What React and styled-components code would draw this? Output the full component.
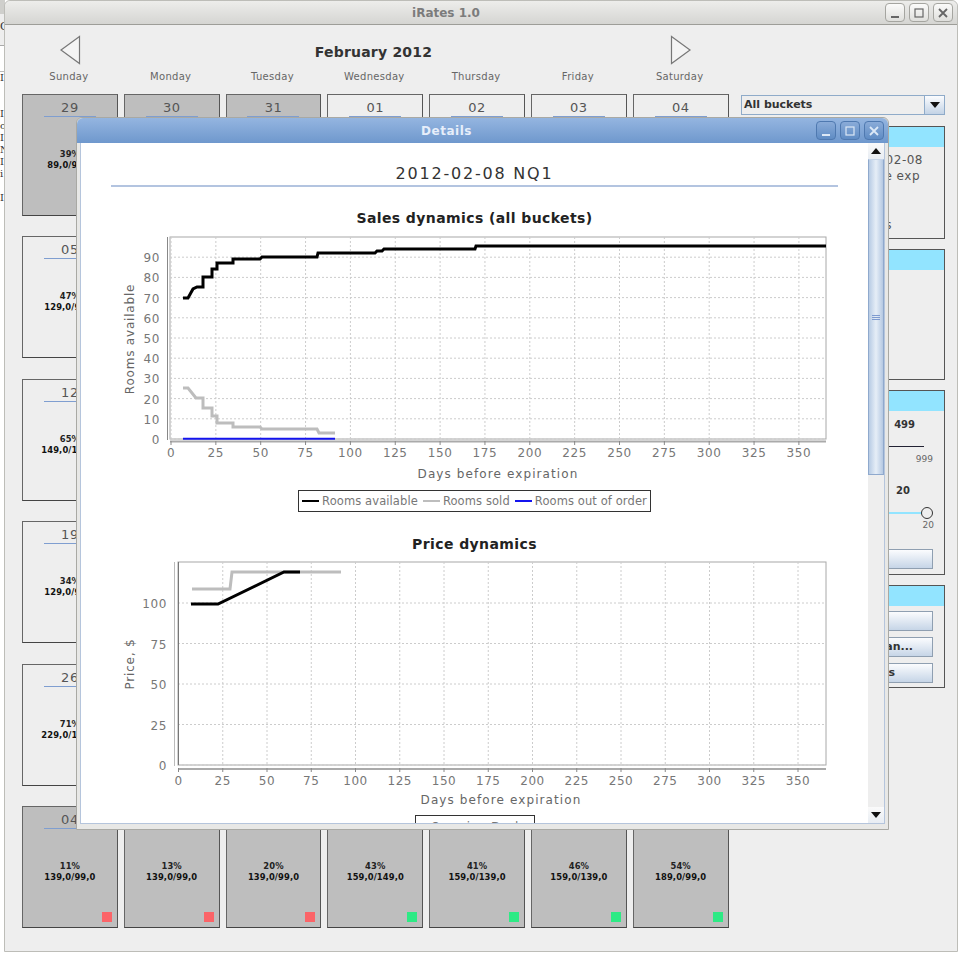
import React from 'react';
import styled, { createGlobalStyle } from 'styled-components';

const GlobalStyle = createGlobalStyle`
  html, body {
    margin: 0;
    padding: 0;
    background: #ffffff;
    font-family: "DejaVu Sans", sans-serif;
  }
`;

const weeks = [
  [
    { day: '29', pct: '39%', price: '89,0/99,0', past: true },
    { day: '30', past: true },
    { day: '31', past: true },
    { day: '01' },
    { day: '02' },
    { day: '03' },
    { day: '04' },
  ],
  [{ day: '05', pct: '47%', price: '129,0/99,0' }, {}, {}, {}, {}, {}, {}],
  [{ day: '12', pct: '65%', price: '149,0/129,0' }, {}, {}, {}, {}, {}, {}],
  [{ day: '19', pct: '34%', price: '129,0/99,0' }, {}, {}, {}, {}, {}, {}],
  [{ day: '26', pct: '71%', price: '229,0/139,0' }, {}, {}, {}, {}, {}, {}],
  [
    { day: '04', pct: '11%', price: '139,0/99,0', past: true, flag: 'red' },
    { day: '05', pct: '13%', price: '139,0/99,0', past: true, flag: 'red' },
    { day: '06', pct: '20%', price: '139,0/99,0', past: true, flag: 'red' },
    { day: '07', pct: '43%', price: '159,0/149,0', past: true, flag: 'green' },
    { day: '08', pct: '41%', price: '159,0/139,0', past: true, flag: 'green' },
    { day: '09', pct: '46%', price: '159,0/139,0', past: true, flag: 'green' },
    { day: '10', pct: '54%', price: '189,0/99,0', past: true, flag: 'green' },
  ],
];

const dayNames = ['Sunday', 'Monday', 'Tuesday', 'Wednesday', 'Thursday', 'Friday', 'Saturday'];
const backLetters = ['I', '', '', 'I', 'o', 'I', 'N', 'I', 'i', '', 'I'];

const range = (from, to, step) => {
  const out = [];
  for (let v = from; v <= to; v += step) out.push(v);
  return out;
};

const availablePts = '183,298 188,298 193,289 197,287 203,287 203,277 212,277 212,269 217,269 217,263 233,263 233,259 260,259 262,257 317,257 318,253 375,253 377,251 382,251 384,249 475,249 476,246 826,246';
const soldPts = '183,388 188,388 196,398 203,398 203,408 212,408 212,416 217,416 217,423 233,423 233,427 260,427 262,429 317,429 319,433 335,433';

const SalesChart = () => {
  const xs = range(0, 350, 25);
  const ys = range(0, 90, 10);
  const px = (v) => 171 + v * 1.794;
  const py = (v) => 439 - v * 2.02;
  return (
    <ChartSvg viewBox="81 227 787 263" height="263">
      <rect x="170" y="237" width="656" height="202" fill="#fff" stroke="#a8a8a8" />
      {xs.map((v) => (
        <line key={v} x1={px(v)} x2={px(v)} y1="237" y2="439" stroke="#ccc" strokeDasharray="2 2" />
      ))}
      {ys.map((v) => (
        <line key={v} x1="170" x2="826" y1={py(v)} y2={py(v)} stroke="#ccc" strokeDasharray="2 2" />
      ))}
      <line x1="167.5" x2="167.5" y1="237" y2="440" stroke="#888" />
      <line x1="170" x2="826" y1="441.5" y2="441.5" stroke="#aaa" strokeWidth="2" />
      {xs.map((v) => (
        <line key={v} x1={px(v)} x2={px(v)} y1="441" y2="445" stroke="#888" />
      ))}
      <polyline points={availablePts} fill="none" stroke="#000" strokeWidth="3" />
      <polyline points={soldPts} fill="none" stroke="#bdbdbd" strokeWidth="3" />
      <line x1="183" x2="335" y1="438.7" y2="438.7" stroke="#1414ee" strokeWidth="2" />
      {xs.map((v) => (
        <AxisText key={v} x={px(v)} y="457" textAnchor="middle">{v}</AxisText>
      ))}
      {ys.map((v) => (
        <AxisText key={v} x="160" y={py(v) + 5} textAnchor="end">{v}</AxisText>
      ))}
      <AxisLabel x="498" y="478" textAnchor="middle">Days before expiration</AxisLabel>
      <AxisLabel transform="translate(134 339) rotate(-90)" textAnchor="middle" $tight>Rooms available</AxisLabel>
    </ChartSvg>
  );
};

const PriceChart = () => {
  const xs = range(0, 350, 25);
  const ys = range(0, 100, 25);
  const px = (v) => 178.5 + v * 1.77;
  const py = (v) => 765 - v * 1.62;
  return (
    <ChartSvg viewBox="81 553 787 262" height="262">
      <rect x="178" y="562" width="648" height="203" fill="#fff" stroke="#a8a8a8" />
      {xs.map((v) => (
        <line key={v} x1={px(v)} x2={px(v)} y1="562" y2="765" stroke="#ccc" strokeDasharray="2 2" />
      ))}
      {ys.map((v) => (
        <line key={v} x1="178" x2="826" y1={py(v)} y2={py(v)} stroke="#ccc" strokeDasharray="2 2" />
      ))}
      <line x1="178.5" x2="178.5" y1="562" y2="765" stroke="#777" />
      <line x1="174.5" x2="174.5" y1="562" y2="766" stroke="#bbb" />
      <line x1="178" x2="826" y1="769" y2="769" stroke="#aaa" strokeWidth="2" />
      {xs.map((v) => (
        <line key={v} x1={px(v)} x2={px(v)} y1="768" y2="772" stroke="#888" />
      ))}
      <polyline points="192,589 230,589 232,572 341,572" fill="none" stroke="#bdbdbd" strokeWidth="3" />
      <polyline points="191,604 218,604 284,572 300,572" fill="none" stroke="#000" strokeWidth="3" />
      {xs.map((v) => (
        <AxisText key={v} x={px(v)} y="785" textAnchor="middle">{v}</AxisText>
      ))}
      {ys.map((v) => (
        <AxisText key={v} x="167" y={py(v) + 5} textAnchor="end">{v}</AxisText>
      ))}
      <AxisLabel x="501" y="804" textAnchor="middle">Days before expiration</AxisLabel>
      <AxisLabel transform="translate(134 664) rotate(-90)" textAnchor="middle" $tight>Price, $</AxisLabel>
    </ChartSvg>
  );
};

const WinButtons = ({ blue }) => (
  <WinButtonRow $blue={blue}>
    <WinButton $blue={blue}>
      <svg width="12" height="12" viewBox="0 0 12 12"><rect x="2" y="9" width="8" height="2" fill="currentColor" /></svg>
    </WinButton>
    <WinButton $blue={blue}>
      <svg width="12" height="12" viewBox="0 0 12 12"><rect x="2" y="2" width="8" height="8" fill="none" stroke="currentColor" strokeWidth="1.2" /></svg>
    </WinButton>
    <WinButton $blue={blue}>
      <svg width="12" height="12" viewBox="0 0 12 12"><path d="M2 2 L10 10 M10 2 L2 10" stroke="currentColor" strokeWidth="1.8" /></svg>
    </WinButton>
  </WinButtonRow>
);

const Arrow = ({ flip }) => (
  <svg width="22" height="30" viewBox="0 0 22 30">
    <polygon
      points={flip ? '1.5,1.5 20,15 1.5,28.5' : '20.5,1.5 2,15 20.5,28.5'}
      fill="#f4f4f4"
      stroke="#777"
      strokeWidth="1.2"
    />
  </svg>
);

const App = () => (
  <Desktop>
    <GlobalStyle />
    <BackWindow>
      <BackTitle />
      <BackToolbar>C</BackToolbar>
      <BackBlank />
      {backLetters.map((letter, i) => (
        <BackRow key={i}>{letter}</BackRow>
      ))}
    </BackWindow>
    <MainWindow>
      <TitleBar>
        <TitleText>iRates 1.0</TitleText>
        <WinButtons />
      </TitleBar>
      <MainBody>
        <CalendarColumn>
          <MonthBar>
            <Arrow />
            <MonthName>February 2012</MonthName>
            <Arrow flip />
          </MonthBar>
          <DayNames>
            {dayNames.map((name) => (
              <DayName key={name}>{name}</DayName>
            ))}
          </DayNames>
          <Weeks>
            {weeks.map((week, i) => (
              <Week key={i}>
                {week.map((cell, j) => (
                  <Cell key={j} $past={cell.past}>
                    <CellDay>{cell.day}</CellDay>
                    <CellPct>{cell.pct}</CellPct>
                    <CellPrice>{cell.price}</CellPrice>
                    {cell.flag && <Flag $color={cell.flag} />}
                  </Cell>
                ))}
              </Week>
            ))}
          </Weeks>
        </CalendarColumn>
        <SideColumn>
          <BucketSelect>
            <BucketLabel>All buckets</BucketLabel>
            <BucketArrow>
              <svg width="10" height="6" viewBox="0 0 10 6"><polygon points="0,0 10,0 5,6" fill="#111" /></svg>
            </BucketArrow>
          </BucketSelect>
          <SidePanel $height={113}>
            <SideHead />
            <SideInfo $right={21} $top={5}>2012-02-08</SideInfo>
            <SideInfo $right={24} $top={0}>Days before exp</SideInfo>
            <SideInfo $right={52} $top={33}>Rooms</SideInfo>
          </SidePanel>
          <SidePanel $height={131}>
            <SideHead />
          </SidePanel>
          <SidePanel $height={185}>
            <SideHead />
            <SliderValue $right={29} $top={8}>499</SliderValue>
            <SliderLine />
            <SliderEnd $right={11} $top={6}>999</SliderEnd>
            <SliderValue $right={34} $top={20}>20</SliderValue>
            <SliderTrack>
              <SliderKnob />
            </SliderTrack>
            <SliderEnd $right={10} $top={5}>20</SliderEnd>
            <SideButton $top={18} />
          </SidePanel>
          <SidePanel $height={103}>
            <SideHead />
            <SideButton $top={5} />
            <SideButton $top={6} $textRight={19}>Plan...</SideButton>
            <SideButton $top={6} $textRight={37}>Rates</SideButton>
          </SidePanel>
        </SideColumn>
      </MainBody>
    </MainWindow>
    <DetailsWindow>
      <DetailsTitle>
        <DetailsText>Details</DetailsText>
        <WinButtons blue />
      </DetailsTitle>
      <DetailsBody>
        <DetailsContent>
          <ReportHead>2012-02-08 NQ1</ReportHead>
          <ChartTitle $top={22}>Sales dynamics (all buckets)</ChartTitle>
          <SalesChart />
          <Legend>
            <LegendItem><LegendLine $color="#000" />Rooms available</LegendItem>
            <LegendItem><LegendLine $color="#bdbdbd" />Rooms sold</LegendItem>
            <LegendItem><LegendLine $color="#1414ee" />Rooms out of order</LegendItem>
          </Legend>
          <ChartTitle $top={23}>Price dynamics</ChartTitle>
          <PriceChart />
          <ClippedLegend>Overview Deal</ClippedLegend>
        </DetailsContent>
        <ScrollBar>
          <ScrollButton>
            <svg width="10" height="6" viewBox="0 0 10 6"><polygon points="0,6 10,6 5,0" fill="#111" /></svg>
          </ScrollButton>
          <ScrollThumb>
            <Grip /><Grip /><Grip />
          </ScrollThumb>
          <ScrollTrack />
          <ScrollButton>
            <svg width="10" height="6" viewBox="0 0 10 6"><polygon points="0,0 10,0 5,6" fill="#111" /></svg>
          </ScrollButton>
        </ScrollBar>
      </DetailsBody>
    </DetailsWindow>
  </Desktop>
);

const Desktop = styled.div`
  position: relative;
  width: 960px;
  height: 956px;
  overflow: hidden;
  background: #ffffff;
`;

const BackWindow = styled.div`
  position: absolute;
  left: 0;
  top: 0;
  width: 5px;
  overflow: hidden;
  display: flex;
  flex-direction: column;
  font-family: "DejaVu Serif", serif;
  color: #333;
`;

const BackTitle = styled.div`
  height: 14px;
  background: #cfcfcc;
`;

const BackToolbar = styled.div`
  height: 32px;
  box-sizing: border-box;
  font-size: 11px;
  line-height: 26px;
  background: #eeeeee;
  border-bottom: 1px solid #aaa;
`;

const BackBlank = styled.div`
  height: 26px;
  box-sizing: border-box;
  border-bottom: 1px solid #bbb;
`;

const BackRow = styled.div`
  height: 12px;
  font-size: 10px;
  line-height: 12px;
`;

const MainWindow = styled.div`
  position: absolute;
  left: 4px;
  top: 0;
  width: 954px;
  height: 952px;
  box-sizing: border-box;
  background: #eeeeee;
  border: 1px solid #bdbdb8;
  border-radius: 6px 6px 0 0;
  display: flex;
  flex-direction: column;
`;

const TitleBar = styled.div`
  height: 23px;
  flex: none;
  position: relative;
  display: flex;
  align-items: center;
  justify-content: center;
  background: linear-gradient(#ededeb, #d5d5d2);
  border-bottom: 1px solid #9d9d98;
  border-radius: 6px 6px 0 0;
`;

const TitleText = styled.div`
  margin-right: 70px;
  font-size: 12px;
  font-weight: 700;
  color: #7c7c7c;
`;

const WinButtonRow = styled.div`
  position: absolute;
  right: 4px;
  top: ${(p) => (p.$blue ? '3px' : '2px')};
  display: flex;
  gap: 4px;
`;

const WinButton = styled.div`
  width: 20px;
  height: 19px;
  box-sizing: border-box;
  display: flex;
  align-items: center;
  justify-content: center;
  border-radius: 4px;
  color: ${(p) => (p.$blue ? '#dce8f6' : '#666')};
  background: ${(p) => (p.$blue ? 'linear-gradient(#8aabd8, #5f8cc4)' : 'linear-gradient(#fbfbfa, #dfdfdc)')};
  border: 1px solid ${(p) => (p.$blue ? '#4f79b0' : '#a5a5a0')};
`;

const MainBody = styled.div`
  flex: 1;
  display: flex;
  align-items: flex-start;
  padding-left: 17px;
`;

const CalendarColumn = styled.div`
  width: 706px;
  flex: none;
  display: flex;
  flex-direction: column;
`;

const MonthBar = styled.div`
  height: 42px;
  width: 633px;
  padding: 10px 0 0 37px;
  display: flex;
  align-items: flex-start;
`;

const MonthName = styled.div`
  flex: 1;
  padding-top: 9px;
  margin-right: 4px;
  text-align: center;
  font-size: 14px;
  font-weight: 700;
  letter-spacing: 0.2px;
  color: #333;
`;

const DayNames = styled.div`
  display: grid;
  grid-template-columns: repeat(7, 95.8px);
  column-gap: 6px;
  margin: -7px 0 0 -1px;
  height: 24px;
`;

const DayName = styled.div`
  font-size: 10px;
  line-height: 14px;
  letter-spacing: 0.3px;
  text-align: center;
  color: #666;
`;

const Weeks = styled.div`
  display: flex;
  flex-direction: column;
  gap: 20.4px;
`;

const Week = styled.div`
  display: grid;
  grid-template-columns: repeat(7, 95.8px);
  column-gap: 6px;
  height: 122px;
`;

const Cell = styled.div`
  position: relative;
  box-sizing: border-box;
  height: 122px;
  padding-top: 5px;
  display: flex;
  flex-direction: column;
  align-items: center;
  background: ${(p) => (p.$past ? '#bebebe' : '#eeeeee')};
  border: 1px solid #666;
  border-right-color: #555;
  border-bottom-color: #444;
`;

const CellDay = styled.div`
  width: 52px;
  height: 16px;
  text-align: center;
  font-size: 13px;
  line-height: 16px;
  letter-spacing: 0.5px;
  color: #555;
  border-bottom: 1px solid #7f9ed0;
`;

const CellPct = styled.div`
  margin-top: 32px;
  font-size: 8.4px;
  font-weight: 700;
  line-height: 11px;
  letter-spacing: 0.1px;
  color: #222;
`;

const CellPrice = styled.div`
  font-size: 8.4px;
  font-weight: 700;
  line-height: 11px;
  letter-spacing: 0.1px;
  color: #111;
`;

const Flag = styled.span`
  position: absolute;
  right: 5px;
  bottom: 5px;
  width: 10px;
  height: 10px;
  background: ${(p) => (p.$color === 'red' ? '#fb6468' : '#2eea85')};
`;

const SideColumn = styled.div`
  width: 204px;
  margin-left: 13px;
  padding-top: 70px;
  display: flex;
  flex-direction: column;
  gap: 10px;
`;

const BucketSelect = styled.div`
  height: 20px;
  box-sizing: border-box;
  margin-bottom: 1px;
  display: flex;
  align-items: stretch;
  background: #eeeeee;
  border: 1px solid #8fabc9;
`;

const BucketLabel = styled.div`
  flex: 1;
  padding-left: 2px;
  font-size: 11px;
  font-weight: 700;
  line-height: 17px;
  color: #333;
`;

const BucketArrow = styled.div`
  width: 19px;
  display: flex;
  align-items: center;
  justify-content: center;
  border-left: 1px solid #8fabc9;
  background: linear-gradient(#fbfcfe, #c3d3e6);
`;

const SidePanel = styled.div`
  height: ${(p) => p.$height}px;
  box-sizing: border-box;
  border: 1px solid #555;
  display: flex;
  flex-direction: column;
  align-items: flex-end;
  overflow: hidden;
`;

const SideHead = styled.div`
  align-self: stretch;
  height: 20px;
  flex: none;
  background: #92e4ff;
`;

const SideInfo = styled.div`
  margin: ${(p) => p.$top}px ${(p) => p.$right}px 0 0;
  font-size: 12px;
  line-height: 16px;
  letter-spacing: 0.5px;
  color: #555;
  white-space: nowrap;
`;

const SliderValue = styled.div`
  margin: ${(p) => p.$top}px ${(p) => p.$right}px 0 0;
  font-size: 10px;
  font-weight: 700;
  line-height: 12px;
  color: #333;
`;

const SliderLine = styled.div`
  width: 60px;
  height: 1px;
  margin: 15px 20px 0 0;
  background: #223;
`;

const SliderEnd = styled.div`
  margin: ${(p) => p.$top}px ${(p) => p.$right}px 0 0;
  font-size: 9px;
  line-height: 12px;
  color: #666;
`;

const SliderTrack = styled.div`
  position: relative;
  width: 60px;
  height: 2px;
  margin: 15px 17px 0 0;
  background: #92e4ff;
`;

const SliderKnob = styled.span`
  position: absolute;
  right: -6px;
  top: -5px;
  width: 12px;
  height: 12px;
  box-sizing: border-box;
  border: 1.5px solid #333;
  border-radius: 50%;
  background: #eeeeee;
`;

const SideButton = styled.div`
  width: 190px;
  height: 20px;
  flex: none;
  margin: ${(p) => p.$top}px 11px 0 0;
  padding-right: ${(p) => p.$textRight || 0}px;
  box-sizing: border-box;
  text-align: right;
  font-size: 11px;
  font-weight: 700;
  line-height: 18px;
  color: #333;
  background: linear-gradient(#fbfcfe, #c6d5e7);
  border: 1px solid #8f9fb1;
`;

const DetailsWindow = styled.div`
  position: absolute;
  left: 76px;
  top: 117px;
  width: 813px;
  height: 713px;
  box-sizing: border-box;
  display: flex;
  flex-direction: column;
  background: #e8e8e6;
  border: 1px solid #a9a9a4;
  border-radius: 6px 6px 0 0;
`;

const DetailsTitle = styled.div`
  position: relative;
  height: 25px;
  flex: none;
  display: flex;
  align-items: center;
  justify-content: center;
  background: linear-gradient(#94b5e0, #6f98cd);
  border-radius: 6px 6px 0 0;
`;

const DetailsText = styled.div`
  margin-right: 72px;
  font-size: 12px;
  font-weight: 700;
  letter-spacing: 0.5px;
  color: #e6eefa;
`;

const DetailsBody = styled.div`
  flex: 1;
  min-height: 0;
  display: flex;
  margin: 0 3px 5px 3px;
  border: 1px solid #b5c5dc;
  border-top: 0;
`;

const DetailsContent = styled.div`
  width: 787px;
  flex: none;
  overflow: hidden;
  background: #ffffff;
  display: flex;
  flex-direction: column;
  align-items: center;
`;

const ReportHead = styled.div`
  flex: none;
  width: 727px;
  height: 20px;
  margin-top: 22px;
  text-align: center;
  font-size: 16px;
  line-height: 18px;
  letter-spacing: 1.8px;
  color: #333;
  border-bottom: 2px solid #b3c4e0;
`;

const ChartTitle = styled.div`
  flex: none;
  margin-top: ${(p) => p.$top}px;
  font-size: 14px;
  font-weight: 700;
  line-height: 18px;
  letter-spacing: 0.4px;
  color: #222;
`;

const ChartSvg = styled.svg`
  flex: none;
  display: block;
  width: 787px;
`;

const AxisText = styled.text`
  font-family: "DejaVu Sans", sans-serif;
  font-size: 12px;
  letter-spacing: 0.6px;
  fill: #777;
`;

const AxisLabel = styled.text`
  font-family: "DejaVu Sans", sans-serif;
  font-size: 12px;
  letter-spacing: ${(p) => (p.$tight ? '0.8px' : '1.1px')};
  fill: #666;
`;

const Legend = styled.div`
  flex: none;
  display: flex;
  gap: 5px;
  height: 22px;
  box-sizing: border-box;
  padding: 0 3px;
  border: 1px solid #333;
  align-items: center;
  font-size: 11.5px;
  letter-spacing: 0.1px;
  color: #777;
`;

const LegendItem = styled.div`
  display: flex;
  align-items: center;
  gap: 3px;
  white-space: nowrap;
`;

const LegendLine = styled.span`
  width: 17px;
  height: 2px;
  background: ${(p) => p.$color};
`;

const ClippedLegend = styled.div`
  flex: none;
  width: 120px;
  height: 22px;
  box-sizing: border-box;
  padding-top: 2px;
  border: 1px solid #333;
  font-size: 12px;
  line-height: 18px;
  text-align: center;
  color: #777;
`;

const ScrollBar = styled.div`
  flex: 1;
  display: flex;
  flex-direction: column;
  background: #eeeeee;
`;

const ScrollButton = styled.div`
  height: 16px;
  flex: none;
  display: flex;
  align-items: center;
  justify-content: center;
  background: linear-gradient(#fafafa, #e8edf3);
`;

const ScrollThumb = styled.div`
  height: 316px;
  flex: none;
  box-sizing: border-box;
  display: flex;
  flex-direction: column;
  justify-content: center;
  align-items: center;
  gap: 1px;
  background: linear-gradient(90deg, #b7cbe4, #e6eef7 50%, #b4c8e2);
  border: 1px solid #8fa9cd;
  border-top-color: #c6d5e9;
`;

const Grip = styled.span`
  width: 8px;
  height: 1px;
  background: #7e9bd0;
`;

const ScrollTrack = styled.div`
  flex: 1;
  background: #eeeeee;
`;

export default App;
